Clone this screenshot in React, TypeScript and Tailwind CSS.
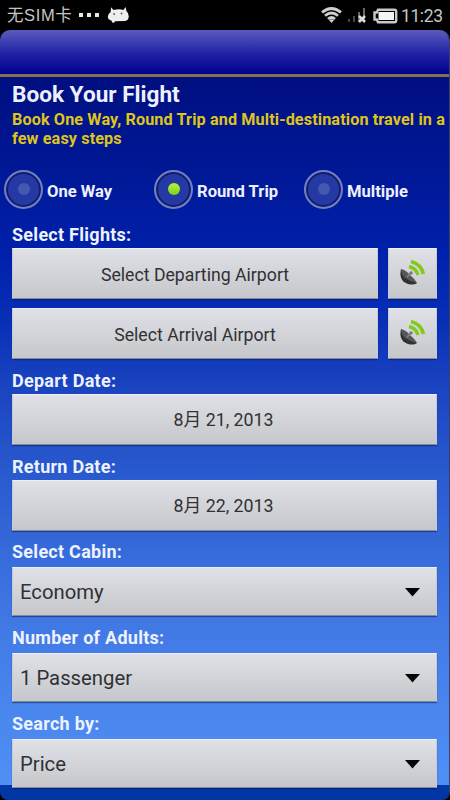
import type { ReactNode } from "react";

const trips = [
  { label: "One Way", selected: false },
  { label: "Round Trip", selected: true },
  { label: "Multiple", selected: false },
];

const surface =
  "bg-linear-to-b from-[#e0e1e6] to-[#c5c7cb] border border-t-[#eeeef5] border-x-[#c8cad8] border-b-[#85899a] text-[#303134] shadow-[0_1px_1px_rgba(0,15,80,0.45)]";

function StatusBar() {
  return (
    <div className="flex h-[30px] items-center bg-black pl-[7px] pr-[7px] text-[#c5c5c5]">
      <span className="w-[65px] whitespace-nowrap font-['Liberation_Sans','Noto_Sans_CJK_SC',sans-serif] text-[16.5px] leading-[30px] tracking-[0.6px]">无SIM卡</span>
      <span className="ml-[7px] flex gap-[4px]">
        <i className="size-[4px] bg-[#e8e8e8]" />
        <i className="size-[4px] bg-[#e8e8e8]" />
        <i className="size-[4px] bg-[#e8e8e8]" />
      </span>
      <svg className="ml-[8px]" width="23" height="18" viewBox="0 0 23 18">
        <path d="M4 1.2 6.5 4Q12 2.7 16.5 4L18.5 1 19.5 5.2Q22 7 21.8 10.5 21.5 14.5 18 15L8 15.3Q7.5 17.2 5.4 16.8L4.4 14.5Q1 14 .8 10.8 .8 7.8 3.7 6Z" fill="#eee" />
        <circle cx="7.2" cy="8" r="1" fill="#666" />
        <circle cx="14.5" cy="7.5" r="1" fill="#666" />
      </svg>
      <svg className="ml-auto" width="21" height="18" viewBox="0 0 21 18">
        <g fill="none" stroke="#cfcfcf" strokeWidth="2.8">
          <path d="M1 6.4Q10.5-1.4 20 6.4" />
          <path d="M4 9.8Q10.5 4.3 17 9.8" />
          <path d="M7 13Q10.5 10 14 13" />
        </g>
        <path d="m8 14 2.5 3 2.5-3Q10.5 12.3 8 14Z" fill="#cfcfcf" />
      </svg>
      <svg className="ml-[5px]" width="20" height="18" viewBox="0 0 20 18">
        <path d="M1 13h2v3H1zM6 10h2v6H6z" fill="#444" />
        <path d="M11 6h2v10h-2zM16 2h2v14h-2z" fill="#666" />
        <path d="m12 10 6 6m0-6-6 6" stroke="#ddd" strokeWidth="2.5" />
      </svg>
      <svg className="ml-[6px] mt-[2px]" width="25" height="16" viewBox="0 0 25 16">
        <path d="M5 1.7H21.5Q23.2 1.7 23.2 3.4V12.6Q23.2 14.3 21.5 14.3H5L3.8 11.5H1.5V4.5H3.8Z" fill="none" stroke="#c8c8c8" strokeWidth="2.4" />
        <path d="M5.5 4h15.5v8H5.5z" fill="#f4f4f4" />
      </svg>
      <span className="ml-[3px] w-[42px] whitespace-nowrap font-['Roboto'] text-[17.5px] leading-[32px] tracking-[-0.4px] pt-[2px]">11:23</span>
    </div>
  );
}

function Label({ children }: { children: ReactNode }) {
  return <h2 className="text-[18px] font-bold leading-[20px] tracking-[0.27px] text-[#eef2ff]">{children}</h2>;
}

function DishIcon() {
  return (
    <svg width="28" height="28" viewBox="0 0 28 28">
      <path d="M3 10Q0 23 12 25.5Q17 26 19 24Z" fill="#303133" />
      <path d="M3 10Q8 11 12 16Q17 20 19 24Q13 23 7 19Q3 15 3 10Z" fill="#55585a" />
      <path d="m9 18 4-4" stroke="#85888d" strokeWidth="1.5" />
      <circle cx="13" cy="14" r="1.8" fill="#777b80" />
      <g fill="none" stroke="#83c91c" strokeWidth="3.4">
        <path d="M11 7.5Q18 9 20 16" />
        <path d="M13 2.5Q23 5 25.5 15" />
      </g>
    </svg>
  );
}

function AirportRow({ text }: { text: string }) {
  return (
    <div className="flex h-[51px] gap-[10px]">
      <button className={`flex-1 pt-[3px] text-[17.7px] ${surface}`}>{text}</button>
      <button className={`flex w-[49px] items-center justify-center pb-[2px] pr-[2px] ${surface}`}>
        <DishIcon />
      </button>
    </div>
  );
}

function DateButton({ children }: { children: ReactNode }) {
  return <button className={`h-[51px] w-full pr-[2px] pt-[2px] text-[17.8px] ${surface}`}>{children}</button>;
}

function Select({ value }: { value: string }) {
  return (
    <button className={`flex h-[49px] w-full items-center justify-between pl-[7px] pr-[16px] pt-[1px] text-[20.3px] ${surface}`}>
      <span>{value}</span>
      <svg width="15" height="9" viewBox="0 0 15 9">
        <path d="M0 0h15L7.5 8.5Z" fill="#050505" />
      </svg>
    </button>
  );
}

export default function App() {
  return (
    <div className="h-[800px] w-[450px] overflow-hidden bg-black font-['Roboto','Noto_Sans_CJK_SC',sans-serif]">
      <StatusBar />
      <div className="h-[770px] overflow-hidden rounded-b-[8px] rounded-t-[10px] border-r border-[#7180d0]/50">
        <header className="h-[47px] border-b-[3px] border-[#807447] bg-linear-to-b from-[#5b59bd] via-[#211ea3] via-55% to-[#000091]" />
        <main className="h-[723px] bg-[linear-gradient(to_bottom,#000f80_0%,#001a9b_16%,#0021ac_25%,#0830b6_34%,#1b44c0_43%,#2858cd_54%,#366bdb_66%,#447de7_79%,#4f90f5_97.9%,#0037a5_97.9%)] pl-[12px] pr-[12px]">
          <h1 className="pt-[5px] text-[22.6px] font-bold leading-[25px] text-[#eef0ff]">Book Your Flight</h1>
          <p className="-mr-3 mt-[3px] whitespace-nowrap text-[16.2px] font-bold leading-[19px] tracking-[0.12px] text-[#dfc51b]">
            Book One Way, Round Trip and Multi-destination travel in a
            <br />
            few easy steps
          </p>

          <div className="-ml-[8px] mt-[21px] flex h-[40px]">
            {trips.map((trip) => (
              <label key={trip.label} className="flex w-[150px] shrink-0 items-center">
                <span className="flex size-[39px] shrink-0 items-center justify-center rounded-full border-2 border-[#7380bd] bg-[#2439a4] shadow-[inset_0_0_0_2px_#101c6f]">
                  <span className={`size-[12px] rounded-full ${trip.selected ? "bg-linear-to-b from-[#bcf03c] to-[#75d518]" : "bg-[#4558b0]"}`} />
                </span>
                <span className="ml-[4px] mt-[7px] whitespace-nowrap text-[16.6px] font-bold text-[#eef0ff]">{trip.label}</span>
              </label>
            ))}
          </div>

          <div className="mt-[16px]"><Label>Select Flights:</Label></div>
          <div className="mt-[3px] flex flex-col gap-[9px]">
            <AirportRow text="Select Departing Airport" />
            <AirportRow text="Select Arrival Airport" />
          </div>
          <div className="mb-[3px] mt-[12px]"><Label>Depart Date:</Label></div>
          <DateButton>8月 21, 2013</DateButton>
          <div className="mb-[3px] mt-[12px]"><Label>Return Date:</Label></div>
          <DateButton>8月 22, 2013</DateButton>
          <div className="mb-[5px] mt-[11px]"><Label>Select Cabin:</Label></div>
          <Select value="Economy" />
          <div className="mb-[5px] mt-[12px]"><Label>Number of Adults:</Label></div>
          <Select value="1 Passenger" />
          <div className="mb-[5px] mt-[12px]"><Label>Search by:</Label></div>
          <Select value="Price" />
        </main>
      </div>
    </div>
  );
}
